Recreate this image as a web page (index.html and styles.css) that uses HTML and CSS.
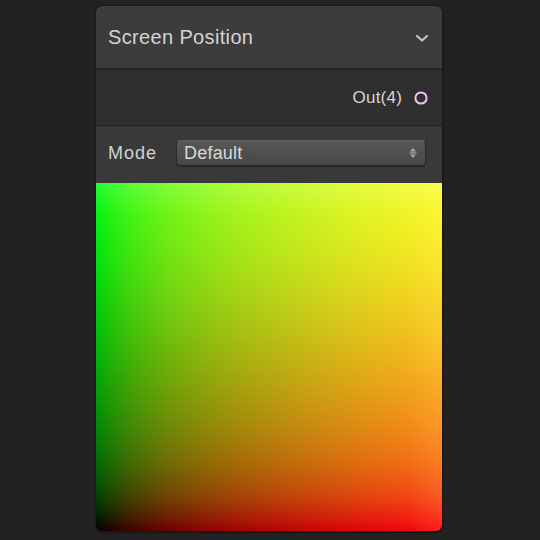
FILE: index.html
```html
<!DOCTYPE html>
<html>
<head>
<meta charset="utf-8">
<link rel="stylesheet" href="styles.css">
</head>
<body>
<div class="node">
  <div class="header">
    <span class="title">Screen Position</span>
    <svg class="chev" width="14" height="10" viewBox="0 0 14 10"><path d="M2 3 L7 7.5 L12 3" fill="none" stroke="#c4c4c4" stroke-width="2.2" stroke-linecap="round" stroke-linejoin="round"/></svg>
  </div>
  <div class="outputs">
    <span class="port-label">Out(4)</span>
    <svg class="port" width="16" height="16" viewBox="0 0 16 16"><circle cx="8" cy="8" r="5.6" fill="#2f2f2f" stroke="#f4c3f2" stroke-width="2"/></svg>
  </div>
  <div class="controls">
    <span class="ctl-label">Mode</span>
    <div class="dropdown">
      <span>Default</span>
      <svg class="updown" width="8" height="12" viewBox="0 0 8 12"><path d="M4 1 L7 4.5 L1 4.5 Z M4 11 L7 7.5 L1 7.5 Z" fill="#a8a8a8"/><rect x="0.5" y="5.4" width="7" height="1.2" fill="#a8a8a8"/></svg>
    </div>
  </div>
  <div class="preview"></div>
</div>
</body>
</html>
```
FILE: styles.css
```css
html, body {
  margin: 0;
  padding: 0;
  background: #222222;
  width: 540px;
  height: 540px;
  overflow: hidden;
}
body {
  font-family: "Liberation Sans", Arial, sans-serif;
  color: #d2d2d2;
}
.node {
  margin: 5px 0 0 95px;
  width: 346px;
  border: 1px solid #191919;
  border-radius: 7px;
  overflow: hidden;
  background: #1e1e1e;
  display: flex;
  flex-direction: column;
  box-shadow: 0 1px 2px rgba(0,0,0,0.4);
}
.header {
  height: 62px;
  background: #3c3c3c;
  display: flex;
  align-items: center;
  justify-content: space-between;
  padding: 0 13px 0 12px;
  border-bottom: 2px solid #242424;
}
.title {
  font-size: 20px;
  color: #d4d4d4;
  letter-spacing: 0.35px;
}
.chev {
  display: block;
  margin-top: 1px;
}
.outputs {
  height: 55px;
  background: #2f2f2f;
  display: flex;
  align-items: center;
  justify-content: flex-end;
  padding: 0 13px 0 0;
  gap: 11px;
  border-bottom: 1px solid #232323;
}
.port-label {
  font-size: 17px;
  color: #d6d6d6;
  letter-spacing: 0.2px;
}
.port { display: block; }
.controls {
  height: 57px;
  background: #393939;
  display: flex;
  align-items: center;
  padding: 0 16px 0 12px;
  gap: 19px;
}
.ctl-label {
  font-size: 18px;
  color: #d2d2d2;
  letter-spacing: 1px;
  margin-top: -2px;
}
.dropdown {
  flex: 1;
  height: 24px;
  margin-top: -3px;
  border-radius: 4px;
  background: linear-gradient(#575757, #474747);
  border: 1px solid #2a2a2a;
  border-top-color: #5e5e5e;
  box-shadow: 0 1px 1px rgba(0,0,0,0.35);
  display: flex;
  align-items: center;
  justify-content: space-between;
  padding: 0 8px 0 7px;
  font-size: 18px;
  letter-spacing: 0.2px;
  color: #d8d8d8;
}
.updown { display: block; }
.preview {
  height: 348px;
  background-image:
    linear-gradient(to top right, #000000 0%, #000208 30%, #00061a 65%, #000a28 100%),
    linear-gradient(to right, #000000 0%, #1e0000 4%, #420000 10%, #6c0000 20%, #8a0000 30%, #a20000 40%, #b50000 50%, #c60000 60%, #d60000 70%, #e40000 80%, #f00000 90%, #fa1a10 100%),
    linear-gradient(to top, #000000 0%, #001e00 4%, #004400 10%, #006c00 20%, #008800 30%, #009e00 40%, #00b200 50%, #00c500 60%, #00d600 70%, #00e500 80%, #00f200 90%, #24fc24 100%);
  background-blend-mode: screen;
}
```
